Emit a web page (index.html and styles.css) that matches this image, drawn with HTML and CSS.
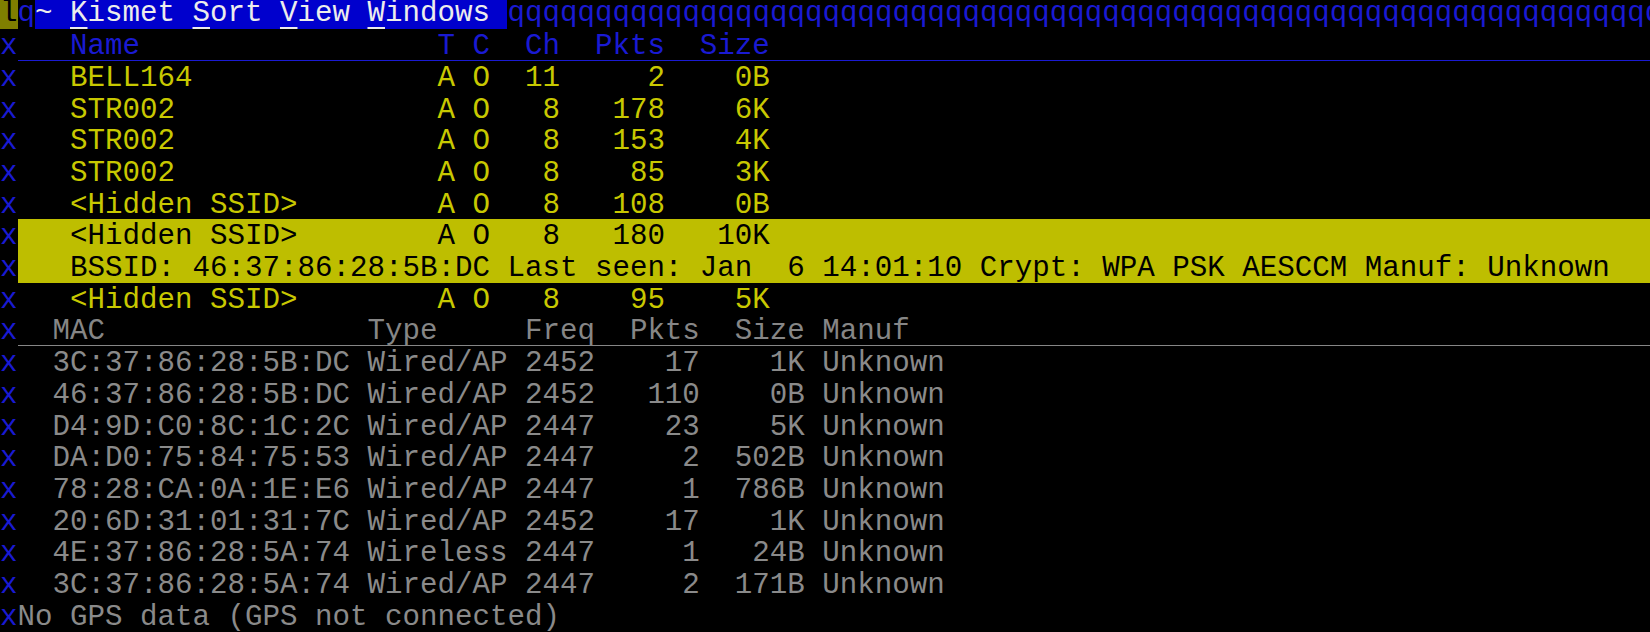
FILE: index.html
```html
<!DOCTYPE html>
<html>
<head>
<meta charset="utf-8">
<link rel="stylesheet" href="styles.css">
</head>
<body>
<div class="screen">
  <div class="menu"><span class="corner">l</span><span class="q">q</span><span class="mbar">~ <u>K</u>ismet <u>S</u>ort <u>V</u>iew <u>W</u>indows </span><span class="q fill">qqqqqqqqqqqqqqqqqqqqqqqqqqqqqqqqqqqqqqqqqqqqqqqqqqqqqqqqqqqqqqqqqq</span></div>

  <div class="row"><span class="b">x</span><span class="hd hd-net">   Name                 T C  Ch  Pkts  Size</span></div>
  <div class="row"><span class="b">x</span><span class="net">   BELL164              A O  11     2    0B</span></div>
  <div class="row"><span class="b">x</span><span class="net">   STR002               A O   8   178    6K</span></div>
  <div class="row"><span class="b">x</span><span class="net">   STR002               A O   8   153    4K</span></div>
  <div class="row"><span class="b">x</span><span class="net">   STR002               A O   8    85    3K</span></div>
  <div class="row"><span class="b">x</span><span class="net">   &lt;Hidden SSID&gt;        A O   8   108    0B</span></div>
  <div class="row"><span class="b">x</span><span class="sel">   &lt;Hidden SSID&gt;        A O   8   180   10K</span></div>
  <div class="row"><span class="b">x</span><span class="sel">   BSSID: 46:37:86:28:5B:DC Last seen: Jan  6 14:01:10 Crypt: WPA PSK AESCCM Manuf: Unknown</span></div>
  <div class="row"><span class="b">x</span><span class="net">   &lt;Hidden SSID&gt;        A O   8    95    5K</span></div>

  <div class="row"><span class="b">x</span><span class="hd hd-cli">  MAC               Type     Freq  Pkts  Size Manuf</span></div>
  <div class="row"><span class="b">x</span><span class="cli">  3C:37:86:28:5B:DC Wired/AP 2452    17    1K Unknown</span></div>
  <div class="row"><span class="b">x</span><span class="cli">  46:37:86:28:5B:DC Wired/AP 2452   110    0B Unknown</span></div>
  <div class="row"><span class="b">x</span><span class="cli">  D4:9D:C0:8C:1C:2C Wired/AP 2447    23    5K Unknown</span></div>
  <div class="row"><span class="b">x</span><span class="cli">  DA:D0:75:84:75:53 Wired/AP 2447     2  502B Unknown</span></div>
  <div class="row"><span class="b">x</span><span class="cli">  78:28:CA:0A:1E:E6 Wired/AP 2447     1  786B Unknown</span></div>
  <div class="row"><span class="b">x</span><span class="cli">  20:6D:31:01:31:7C Wired/AP 2452    17    1K Unknown</span></div>
  <div class="row"><span class="b">x</span><span class="cli">  4E:37:86:28:5A:74 Wireless 2447     1   24B Unknown</span></div>
  <div class="row"><span class="b">x</span><span class="cli">  3C:37:86:28:5A:74 Wired/AP 2447     2  171B Unknown</span></div>
  <div class="row"><span class="b">x</span><span class="cli">No GPS data (GPS not connected)</span></div>
</div>
</body>
</html>
```

FILE: styles.css
```css
html, body {
  margin: 0;
  padding: 0;
  background: #000;
  overflow: hidden;
}

.screen {
  width: 1650px;
  height: 632px;
  overflow: hidden;
  font-family: "Liberation Mono", "Courier New", monospace;
  font-size: 29.16px;
  color: #8a8a8a;
}

.menu {
  display: flex;
  height: 29.3px;
  line-height: 27.9px;
  overflow: hidden;
  white-space: pre;
}

.corner {
  background: #7f7f00;
  color: #000;
}

.q {
  color: #1a1ad2;
}

.fill {
  flex: 1;
  overflow: hidden;
}

.mbar {
  background: #0000cd;
  color: #ececec;
}

.mbar u {
  text-decoration-thickness: 1.5px;
  text-underline-offset: 6px;
}

.row {
  display: flex;
  height: 31.7px;
  white-space: pre;
}

.row > span {
  box-sizing: border-box;
  padding-top: 2px;
  line-height: 31.7px;
}

.b {
  color: #1a1ad2;
}

.hd {
  flex: 1;
  border-bottom: 1px solid;
}

.hd-net {
  color: #1a1ad2;
  border-color: #1a1ad2;
}

.hd-cli {
  color: #868686;
  border-color: #868686;
}

.net {
  color: #c8c800;
}

.sel {
  flex: 1;
  background: #bebe00;
  color: #000;
}

.cli {
  color: #8a8a8a;
}
```
